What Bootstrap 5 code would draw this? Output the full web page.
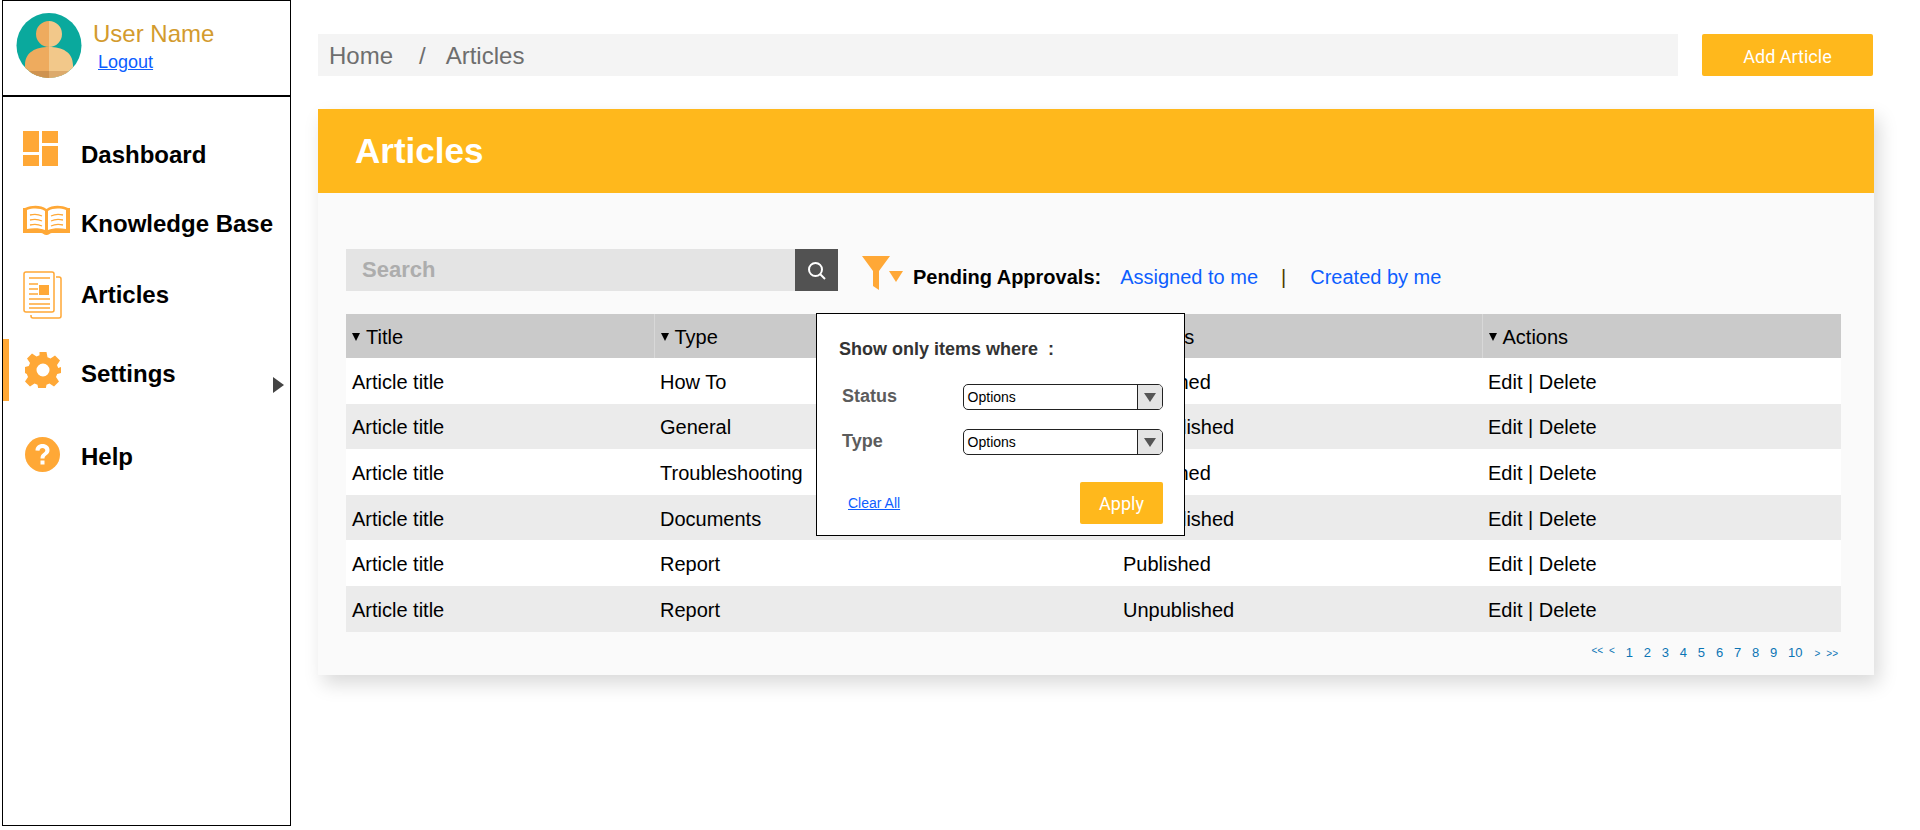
<!DOCTYPE html>
<html lang="en">
<head>
  <meta charset="UTF-8">
  <meta name="viewport" content="width=device-width, initial-scale=1.0">
  <title>Articles</title>

  <link rel="stylesheet" href="https://cdn.jsdelivr.net/npm/bootstrap@5.3.0/dist/css/bootstrap.min.css">

  <style>
    body {
      font-family: "Liberation Sans", Arial, sans-serif;
      background: #fff;
      color: #000;
      height: 830px;
      overflow: hidden;
    }

    /* Sidebar */
    .side-box {
      width: 289px;
      height: 826px;
      margin-left: 2px;
      border: 1px solid #000;
      flex: none;
    }
    .user-box {
      height: 96px;
      border-bottom: 2px solid #000;
      padding: 11px 0 0 13px;
    }
    .user-text {
      margin-left: 11px;
    }
    .user-name {
      color: #d39b2e;
      font-size: 24px;
      line-height: 28px;
      margin-top: 8px;
    }
    .logout-link {
      font-size: 18px;
      line-height: 22px;
      margin-top: 3px;
      margin-left: 5px;
      color: #0d5eff;
      display: block;
    }
    .side-nav {
      padding-top: 23px;
    }
    .side-link {
      position: relative;
      font-size: 24px;
      font-weight: 700;
      color: #000;
      text-decoration: none;
    }
    .side-h1 { height: 70px; }
    .side-h2 { height: 68px; }
    .side-h3 { height: 74px; }
    .side-h4 { height: 84px; }
    .side-h5 { height: 82px; }
    .side-icon {
      width: 58px;
      margin-left: 20px;
      flex: none;
      line-height: 0;
    }
    .icon-up14 { margin-bottom: 14px; }
    .icon-up8 { margin-bottom: 8px; }
    .icon-up6 { margin-bottom: 6px; }
    .icon-gear { padding-left: 2px; }
    .side-active {
      position: absolute;
      left: 0;
      top: 7px;
      width: 6px;
      height: 62px;
      background: #ffa836;
    }
    .side-arrow {
      position: absolute;
      right: 6px;
      top: 45px;
      width: 0;
      height: 0;
      border-left: 11px solid #444;
      border-top: 8px solid transparent;
      border-bottom: 8px solid transparent;
    }

    /* Main area */
    .main-area {
      width: 1556px;
      margin-left: 27px;
      padding-top: 34px;
    }
    .crumb-bar {
      width: 1360px;
      height: 42px;
      background: #f4f4f4;
      color: #6e6e6e;
      font-size: 24px;
      padding: 2px 0 0 11px;
    }
    .crumb-sep {
      margin: 0 20px 0 26px;
    }
    .btn-amber {
      background: #ffb81c;
      color: #fff;
      border: 0;
      border-radius: 2px;
      font-family: Roboto, sans-serif;
      font-weight: 400;
      padding: 0;
    }
    .btn-add {
      width: 171px;
      height: 42px;
      margin-left: 24px;
      font-size: 18px;
      padding-top: 2px;
    }
    .panel-box {
      position: relative;
      margin-top: 33px;
      height: 566px;
      background: #fafafa;
      box-shadow: 5px 9px 18px rgba(0, 0, 0, .15);
    }
    .panel-head {
      height: 84px;
      background: #ffb81c;
      color: #fff;
      font-size: 35px;
      font-weight: 700;
      padding-left: 37px;
    }
    .panel-body {
      padding: 56px 33px 0 28px;
    }
    .tool-row {
      height: 42px;
    }
    .search-box {
      width: 449px;
      height: 42px;
      background: #e4e4e4;
      color: #adadad;
      font-size: 22px;
      font-weight: 700;
      padding: 0 0 2px 16px;
    }
    .search-btn {
      width: 43px;
      height: 42px;
      background: #525252;
    }
    .filter-row {
      font-size: 20px;
      margin: 13px 0 0 24px;
    }
    .filter-row svg {
      margin-bottom: 7px;
    }
    .filter-row a {
      color: #0d5eff;
      text-decoration: none;
    }
    .filter-label {
      font-weight: 700;
      margin: 0 19px 0 10px;
    }
    .filter-sep {
      margin: 0 24px 0 23px;
      color: #4b3a00;
    }

    /* Table */
    .article-table {
      width: 1495px;
      margin-top: 23px;
      font-size: 20px;
      table-layout: fixed;
      border-collapse: collapse;
    }
    .article-table th {
      height: 44px;
      background: #cacaca;
      font-weight: 400;
      padding: 2px 0 0 6px;
      border-left: 1px solid #d8d8d8;
    }
    .article-table th:first-child {
      border-left: 0;
    }
    .article-table td {
      height: 45.6px;
      padding: 2px 0 0 6px;
      background: #fff;
    }
    .article-table tbody tr:nth-child(even) td {
      background: #ebebeb;
    }
    .sort-mark {
      display: inline-block;
      width: 0;
      height: 0;
      margin-right: 6px;
      vertical-align: 3px;
      border-top: 8px solid #000;
      border-left: 4px solid transparent;
      border-right: 4px solid transparent;
    }
    .col-title { width: 308px; }
    .col-type { width: 463px; }
    .col-status { width: 365px; }

    /* Pagination */
    .pager-row {
      width: 1495px;
      margin-top: 10px;
      padding-right: 3px;
      font-size: 13px;
      line-height: 18px;
      color: #0b75b5;
    }
    .pager-row span {
      margin-left: 10.8px;
    }
    .pager-row .pager-end {
      font-size: 10px;
      margin-left: 6px;
    }
    .pager-row .pager-up {
      margin-bottom: 4px;
    }
    .pager-row .pager-down {
      margin-top: 3px;
    }
    .pager-row .pager-gap {
      margin-left: 12px;
    }

    /* Filter popup */
    .filter-popup {
      position: absolute;
      left: 498px;
      top: 204px;
      width: 369px;
      height: 223px;
      background: #fff;
      border: 1px solid #000;
      padding: 25px 21px 0 22px;
    }
    .popup-title {
      font-size: 18px;
      font-weight: 700;
      color: #333;
      line-height: 21px;
      margin-bottom: 23px;
    }
    .popup-row {
      height: 45px;
      font-size: 18px;
      font-weight: 700;
      color: #5c5c5c;
      padding-left: 3px;
    }
    .popup-row label {
      width: 121px;
    }
    .fake-select {
      width: 201px;
      height: 26px;
      margin-top: 1px;
      border: 1px solid #222;
      border-radius: 5px;
      font-size: 14px;
      font-weight: 400;
      color: #000;
      padding-left: 4px;
      overflow: hidden;
    }
    .fake-arrow {
      width: 25px;
      height: 100%;
      background: #e4e4e4;
      border-left: 1px solid #222;
    }
    .fake-arrow i {
      width: 0;
      height: 0;
      border-top: 9px solid #555;
      border-left: 6px solid transparent;
      border-right: 6px solid transparent;
    }
    .popup-foot {
      margin-top: 9px;
    }
    .clear-link {
      font-size: 14px;
      color: #0d5eff;
      margin-left: 9px;
    }
    .btn-apply {
      width: 83px;
      height: 42px;
      font-size: 18px;
    }
  </style>
</head>

<body class="d-flex">

<!-- Sidebar -->
<div class="side-box">
  <div class="user-box d-flex">
    <svg width="66" height="67" viewBox="0 0 66 67">
      <defs><clipPath id="avatarClip"><circle cx="33" cy="33.5" r="32.5"/></clipPath></defs>
      <g clip-path="url(#avatarClip)">
        <rect width="66" height="67" fill="#0aa99d"/>
        <path d="M33 9a13 13 0 0 0 0 26C20 35 9 40 9 53v14h24z" fill="#eeab5e"/>
        <path d="M33 9a13 13 0 0 1 0 26c13 0 24 5 24 18v14H33z" fill="#f2c88a"/>
        <rect x="0" y="59" width="33" height="8" fill="#cf9350"/>
        <rect x="33" y="59" width="33" height="8" fill="#dcaa6c"/>
      </g>
    </svg>
    <div class="user-text">
      <div class="user-name">User Name</div>
      <a class="logout-link" href="#">Logout</a>
    </div>
  </div>

  <nav class="side-nav">
    <a class="side-link side-h1 d-flex align-items-center" href="#">
      <span class="side-icon icon-up14">
        <svg width="35" height="35" viewBox="0 0 35 35" fill="#ffa836"><rect x="0" y="0" width="16" height="21"/><rect x="19" y="0" width="16" height="12"/><rect x="0" y="24" width="16" height="11"/><rect x="19" y="15" width="16" height="20"/></svg>
      </span>
      Dashboard
    </a>
    <a class="side-link side-h2 d-flex align-items-center" href="#">
      <span class="side-icon icon-up8">
        <svg width="47" height="31" viewBox="0 0 47 31">
          <path d="M0 3h2C9 0 18 0 23.500 4 29 0 38 0 45 3h2v25H29c-2 0-3 2-5.500 2S20 28 18 28H0z" fill="#ffa836"/>
          <path d="M4 5c6-2 13-2 18 1v19c-5-2-12-2-18-1zM43 5c-6-2-13-2-18 1v19c5-2 12-2 18-1z" fill="#fff"/>
          <path d="M7 10c4-1 8-1 12 1M7 15c4-1 8-1 12 1M7 20c4-1 8-1 12 1M28 11c4-2 8-2 12-1M28 16c4-2 8-2 12-1M28 21c4-2 8-2 12-1" fill="none" stroke="#ffa836" stroke-width="1.300"/>
        </svg>
      </span>
      Knowledge Base
    </a>
    <a class="side-link side-h3 d-flex align-items-center" href="#">
      <span class="side-icon">
        <svg width="39" height="48" viewBox="0 0 39 48" fill="none" stroke="#ffa836" stroke-width="1.500">
          <rect x="1" y="1" width="30" height="40" rx="2"/>
          <path d="M33 6h3a2 2 0 0 1 2 2v37a2 2 0 0 1-2 2H10a2 2 0 0 1-2-2v-1"/>
          <path d="M6 7h21M6 13h9M6 18h9M6 23h9M6 28h21M6 33h21M6 37h21"/>
          <rect x="16" y="14" width="10" height="10" fill="#ffa836" stroke="none"/>
        </svg>
      </span>
      Articles
    </a>
    <a class="side-link side-h4 d-flex align-items-center" href="#">
      <span class="side-active"></span>
      <span class="side-icon icon-gear icon-up8">
        <svg width="36" height="36" viewBox="0 0 36 36" fill="#ffa836">
          <path fill-rule="evenodd" d="M14.500 0h7l1 5.200 3 1.300 4.500-3 5 5-3 4.500 1.200 3L36 15v6l-3.800 1-1.200 3 3 4.500-5 5-4.500-3-3 1.300-1 5.200h-7l-1-5.200-3-1.300-4.500 3-5-5 3-4.500-1.200-3L0 21v-6l3.800-1 1.200-3-3-4.500 5-5 4.500 3 3-1.300zM18 11.500a6.500 6.500 0 1 0 0 13 6.500 6.500 0 0 0 0-13z"/>
        </svg>
      </span>
      Settings
      <span class="side-arrow"></span>
    </a>
    <a class="side-link side-h5 d-flex align-items-center" href="#">
      <span class="side-icon icon-gear icon-up6">
        <svg width="35" height="35" viewBox="0 0 35 35">
          <circle cx="17.500" cy="17.500" r="17.500" fill="#ffa836"/>
          <path d="M10.500 13.500c0-4 3-6.500 7-6.500s7 2.500 7 6c0 5-5 4.800-5 8.500h-4c0-5.500 4.800-5.300 4.800-8.300 0-1.300-1.200-2.300-2.800-2.300-1.800 0-2.900 1.200-3 2.800z" fill="#fff"/>
          <rect x="15.500" y="23.500" width="4" height="4" fill="#fff"/>
        </svg>
      </span>
      Help
    </a>
  </nav>
</div>

<!-- Main content -->
<div class="main-area">
  <div class="d-flex">
    <div class="crumb-bar d-flex align-items-center">
      <span>Home</span><span class="crumb-sep">/</span><span>Articles</span>
    </div>
    <button class="btn btn-amber btn-add" type="button">Add Article</button>
  </div>

  <div class="panel-box">
    <div class="panel-head d-flex align-items-center">Articles</div>
    <div class="panel-body">
      <div class="tool-row d-flex align-items-center">
        <div class="search-box d-flex align-items-center">Search</div>
        <div class="search-btn d-flex align-items-center justify-content-center">
          <svg width="19" height="19" viewBox="0 0 19 19" fill="none" stroke="#fff" stroke-width="2"><circle cx="8.500" cy="8.500" r="6.500"/><path d="M13 13l5 5"/></svg>
        </div>
        <div class="filter-row d-flex align-items-center">
          <svg width="41" height="34" viewBox="0 0 41 34" fill="#ffa836"><path d="M0 0h28L17 15v19l-6-4V15z"/><path d="M27 15h14l-7 11z"/></svg>
          <span class="filter-label">Pending Approvals:</span>
          <a href="#">Assigned to me</a>
          <span class="filter-sep">|</span>
          <a href="#">Created by me</a>
        </div>
      </div>

      <table class="article-table">
        <colgroup>
          <col class="col-title"><col class="col-type"><col class="col-status"><col>
        </colgroup>
        <thead>
          <tr>
            <th><span class="sort-mark"></span>Title</th>
            <th><span class="sort-mark"></span>Type</th>
            <th><span class="sort-mark"></span>Status</th>
            <th><span class="sort-mark"></span>Actions</th>
          </tr>
        </thead>
        <tbody>
          <tr><td>Article title</td><td>How To</td><td>Published</td><td>Edit | Delete</td></tr>
          <tr><td>Article title</td><td>General</td><td>Unpublished</td><td>Edit | Delete</td></tr>
          <tr><td>Article title</td><td>Troubleshooting</td><td>Published</td><td>Edit | Delete</td></tr>
          <tr><td>Article title</td><td>Documents</td><td>Unpublished</td><td>Edit | Delete</td></tr>
          <tr><td>Article title</td><td>Report</td><td>Published</td><td>Edit | Delete</td></tr>
          <tr><td>Article title</td><td>Report</td><td>Unpublished</td><td>Edit | Delete</td></tr>
        </tbody>
      </table>

      <div class="pager-row d-flex justify-content-end align-items-center">
        <span class="pager-end pager-up">&lt;&lt;</span><span class="pager-end pager-up">&lt;</span>
        <span>1</span><span>2</span><span>3</span><span>4</span><span>5</span><span>6</span><span>7</span><span>8</span><span>9</span><span>10</span>
        <span class="pager-end pager-down pager-gap">&gt;</span><span class="pager-end pager-down">&gt;&gt;</span>
      </div>
    </div>

    <!-- Filter popup over the table -->
    <div class="filter-popup">
      <div class="popup-title">Show only items where &nbsp;:</div>
      <div class="popup-row d-flex">
        <label>Status</label>
        <div class="fake-select d-flex justify-content-between align-items-center"><span>Options</span><span class="fake-arrow d-flex align-items-center justify-content-center"><i></i></span></div>
      </div>
      <div class="popup-row d-flex">
        <label>Type</label>
        <div class="fake-select d-flex justify-content-between align-items-center"><span>Options</span><span class="fake-arrow d-flex align-items-center justify-content-center"><i></i></span></div>
      </div>
      <div class="popup-foot d-flex justify-content-between align-items-center">
        <a class="clear-link" href="#">Clear All</a>
        <button class="btn btn-amber btn-apply" type="button">Apply</button>
      </div>
    </div>
  </div>
</div>

<script src="https://cdn.jsdelivr.net/npm/bootstrap@5.3.0/dist/js/bootstrap.bundle.min.js"></script>
</body>
</html>
